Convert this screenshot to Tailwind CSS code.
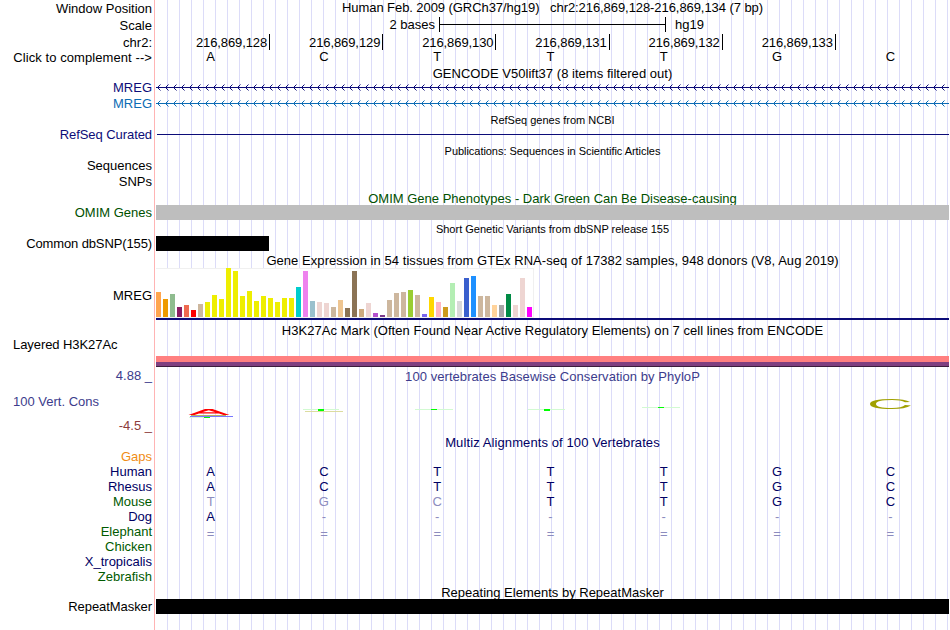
<!DOCTYPE html>
<html lang="en">

<head>
  <meta charset="UTF-8" />
  <meta name="viewport" content="width=device-width, initial-scale=1.0" />
  <title>Human chr2:216,869,128-216,869,134 - Genome Browser</title>
  <script src="https://cdn.jsdelivr.net/npm/@tailwindcss/browser@4"></script>
</head>

<body class="bg-white">
  <main class="flex h-[630px] w-[950px] overflow-hidden whitespace-nowrap bg-white font-['Liberation_Sans',Arial,sans-serif] text-[13px] leading-[15px] text-black">

    <!-- Track labels -->
    <aside class="flex w-[152px] flex-col items-end">
      <p class="mt-px">Window Position</p>
      <p class="mt-0.5">Scale</p>
      <p class="mt-0.5">chr2:</p>
      <p class="tracking-[0.08px]">Click to complement --&gt;</p>
      <p class="mt-[15px] text-[#0c0c78]">MREG</p>
      <p class="mt-px text-[#0c6cb4]">MREG</p>
      <p class="mt-4 tracking-[-0.07px] text-[#0c0c78]">RefSeq Curated</p>
      <p class="mt-4">Sequences</p>
      <p class="mt-px">SNPs</p>
      <p class="mt-4 text-[#005000]">OMIM Genes</p>
      <p class="mt-4 tracking-[-0.12px]">Common dbSNP(155)</p>
      <p class="mt-[37px]">MREG</p>
      <p class="mt-[34px] self-start pl-[13px] tracking-[-0.07px]">Layered H3K27Ac</p>
      <p class="mt-4 text-[#3c3c8c]">4.88 _</p>
      <p class="mt-[11px] self-start pl-[13px] text-[#3c3c8c]">100 Vert. Cons</p>
      <p class="mt-[9px] text-[#8c3c3c]">-4.5 _</p>
      <p class="mt-4 text-[#f08c14]">Gaps</p>
      <p class="text-[#000064]">Human</p>
      <p class="text-[#000064]">Rhesus</p>
      <p class="text-[#005a00]">Mouse</p>
      <p class="text-[#000064]">Dog</p>
      <p class="text-[#005a00]">Elephant</p>
      <p class="text-[#005a00]">Chicken</p>
      <p class="text-[#000064]">X_tropicalis</p>
      <p class="text-[#005a00]">Zebrafish</p>
      <p class="mt-[15px] tracking-[-0.07px]">RepeatMasker</p>
    </aside>

    <div class="ml-0.5 mr-px w-px bg-[#ffb4b4]"></div>

    <!-- Tracks -->
    <section class="flex w-[793px] flex-col bg-[repeating-linear-gradient(to_right,transparent_0_11px,#dcdcf8_11px_12px)]">
      <h1 class="whitespace-pre text-center tracking-[-0.07px]">Human Feb. 2009 (GRCh37/hg19)   chr2:216,869,128-216,869,134 (7 bp)</h1>

      <!-- Scale bar -->
      <div class="mt-0.5 flex h-[15px]">
        <span class="w-[279px] text-right">2 bases</span>
        <div class="ml-1 flex w-[227px] items-center border-x border-black">
          <div class="h-px w-full bg-black"></div>
        </div>
        <span class="ml-[9px]">hg19</span>
      </div>

      <div class="mt-0.5 grid h-[15px] grid-cols-7 pl-px pt-px text-right tracking-[-0.1px]">
        <span class="-mt-px border-r border-black pr-0.5 pt-px">216,869,128</span>
        <span class="-mt-px border-r border-black pr-0.5 pt-px">216,869,129</span>
        <span class="-mt-px border-r border-black pr-0.5 pt-px">216,869,130</span>
        <span class="-mt-px border-r border-black pr-0.5 pt-px">216,869,131</span>
        <span class="-mt-px border-r border-black pr-0.5 pt-px">216,869,132</span>
        <span class="-mt-px border-r border-black pr-0.5 pt-px">216,869,133</span>
      </div>
      <div class="grid grid-cols-7 text-center *:pr-1">
        <span>A</span><span>C</span><span>T</span><span>T</span><span>T</span><span>G</span><span>C</span>
      </div>

      <!-- Genes -->
      <h2 class="mt-0.5 text-center tracking-[0.03px]">GENCODE V50lift37 (8 items filtered out)</h2>
      <svg class="mt-[3px] h-[7px] w-full">
        <pattern id="strand" width="8" height="7" patternUnits="userSpaceOnUse">
          <path d="M4.5 .5l-3 3 3 3" fill="none" stroke="#0c0c78" />
        </pattern>
        <rect width="793" height="7" fill="url(#strand)" />
        <rect y="3" width="793" height="1" fill="#0c0c78" />
      </svg>
      <svg class="mt-[9px] h-[7px] w-full">
        <pattern id="strand-alt" width="8" height="7" patternUnits="userSpaceOnUse">
          <path d="M4.5 .5l-3 3 3 3" fill="none" stroke="#0c6cb4" />
        </pattern>
        <rect width="793" height="7" fill="url(#strand-alt)" />
        <rect y="3" width="793" height="1" fill="#0c6cb4" />
      </svg>
      <h2 class="mt-[7px] text-center text-[11px] leading-3">RefSeq genes from NCBI</h2>
      <div class="ml-px mt-2 h-px bg-[#0c0c78]"></div>
      <h2 class="mt-2.5 text-center text-[11px] leading-3 tracking-[-0.04px]">Publications: Sequences in Scientific Articles</h2>

      <!-- Variants -->
      <h2 class="mt-[34px] h-3.5 text-center text-[#005000]">OMIM Gene Phenotypes - Dark Green Can Be Disease-causing</h2>
      <div class="h-[15px] bg-[#bebebe]"></div>
      <h2 class="mt-[3px] text-center text-[11px] leading-3">Short Genetic Variants from dbSNP release 155</h2>
      <div class="mt-px h-[15px] w-[113px] bg-black"></div>

      <!-- GTEx expression -->
      <h2 class="mt-0.5 text-center tracking-[0.055px]">Gene Expression in 54 tissues from GTEx RNA-seq of 17382 samples, 948 donors (V8, Aug 2019)</h2>
      <div id="gtex" class="flex h-[50px] w-[378px] items-end gap-0.5 border border-l-0 border-[#f0f0f0] bg-white *:w-[5px] *:shrink-0"></div>
      <div class="h-0.5 bg-[#0c0c78]"></div>

      <!-- Regulation -->
      <h2 class="mt-[3px] text-center tracking-[0.045px]">H3K27Ac Mark (Often Found Near Active Regulatory Elements) on 7 cell lines from ENCODE</h2>
      <div class="mt-[18px] h-[11px] border-b border-[#3c1e3c] bg-[#804080]">
        <div class="h-1.5 bg-[#ff8080]"></div>
      </div>

      <!-- Conservation -->
      <h2 class="mt-0.5 text-center tracking-[0.06px] text-[#3c3c8c]">100 vertebrates Basewise Conservation by PhyloP</h2>
      <svg class="h-[51px] w-full" viewBox="156 384 793 51">
        <path d="M188.5 415L205 409h7.5L229.5 415h-6l-4.5-1.6h-20l-4.500 1.600zM202 412.300h13.500l-6.700-2z" fill="#f00" fill-rule="evenodd" />
        <path d="M191 415.500h35" stroke="#b4b464" />
        <path d="M190 416.500h43" stroke="#7878ff" />
        <path d="M189 417.500h14" stroke="#dcfadc" />
        <path d="M204 417.500h6" stroke="#0f0" />
        <path d="M303 409.500h36M415 409.500h38M528 409.500h37M642 407.500h38" stroke="#d2fad2" />
        <path d="M305 411.500h38" stroke="#dcdca0" />
        <path d="M318 410h6M544 410h6" stroke="#0f0" stroke-width="2" />
        <path d="M431 409.500h6M658 407.500h6" stroke="#0f0" />
        <path d="M911 405.500Q905 409 892 409Q870 409 870 404Q870 399 892 399Q905 399 910 402L905 402.300Q901 400 892 400Q876 400 876 404Q876 408 892 408Q902 408 905 405Z" fill="#a0a000" />
      </svg>
      <h2 class="text-center tracking-[0.1px] text-[#000064]">Multiz Alignments of 100 Vertebrates</h2>
      <div class="mt-3.5 grid grid-cols-7 text-center text-[#000064] *:pr-1">
        <span>A</span><span>C</span><span>T</span><span>T</span><span>T</span><span>G</span><span>C</span>
        <span>A</span><span>C</span><span>T</span><span>T</span><span>T</span><span>G</span><span>C</span>
        <span class="text-[#8c8cbe]">T</span><span class="text-[#8c8cbe]">G</span><span class="text-[#8c8cbe]">C</span><span>T</span><span>T</span><span>G</span><span>C</span>
        <span>A</span><span class="text-[#8c8cbe]">-</span><span class="text-[#8c8cbe]">-</span><span class="text-[#8c8cbe]">-</span><span class="text-[#8c8cbe]">-</span><span class="text-[#8c8cbe]">-</span><span class="text-[#8c8cbe]">-</span>
      </div>
      <div class="mt-0.5 grid grid-cols-7 text-center text-[#8c8cbe] *:pr-1">
        <span>=</span><span>=</span><span>=</span><span>=</span><span>=</span><span>=</span><span>=</span>
      </div>

      <!-- Repeats -->
      <h2 class="mt-11 h-3.5 text-center">Repeating Elements by RepeatMasker</h2>
      <div class="h-[15px] bg-black"></div>
    </section>
  </main>

  <script>
    // one bar per GTEx tissue: [height, colour]
    const tissues = [
      [25, '#ffa54f'], [18, '#ee9a00'], [23, '#8fbc8f'], [10, '#8b1c62'], [12, '#ee6a50'], [7, '#ff0000'],
      [13, '#cdb79e'], [15, '#eeee00'], [22, '#eeee00'], [18, '#eeee00'], [49, '#eeee00'], [46, '#eeee00'],
      [21, '#eeee00'], [26, '#eeee00'], [16, '#eeee00'], [21, '#eeee00'], [19, '#eeee00'], [15, '#eeee00'],
      [19, '#eeee00'], [19, '#eeee00'], [30, '#00cdcd'], [46, '#ee82ee'], [16, '#9ac0cd'], [15, '#eed5d2'],
      [14, '#eed5d2'], [10, '#cdb79e'], [17, '#eec591'], [9, '#8b7355'], [46, '#8b7355'], [8, '#cdaa7d'],
      [14, '#eed5d2'], [4, '#b452cd'], [2, '#7a378b'], [17, '#cdb79e'], [24, '#cdb79e'], [25, '#cdb79e'],
      [27, '#9acd32'], [22, '#cdb79e'], [3, '#7a67ee'], [20, '#ffd700'], [15, '#ffb6c1'], [10, '#cd9b1d'],
      [34, '#b4eeb4'], [16, '#d9d9d9'], [39, '#3a5fcd'], [41, '#1e90ff'], [21, '#cdb79e'], [21, '#cdb79e'],
      [12, '#ffd39b'], [12, '#a6a6a6'], [23, '#008b45'], [12, '#eed5d2'], [39, '#eed5d2'], [10, '#ff00ff'],
    ]
    document.getElementById('gtex').innerHTML = tissues
      .map(([h, c]) => `<i style="height:${h}px;background:${c}"></i>`)
      .join('')
  </script>
</body>

</html>
